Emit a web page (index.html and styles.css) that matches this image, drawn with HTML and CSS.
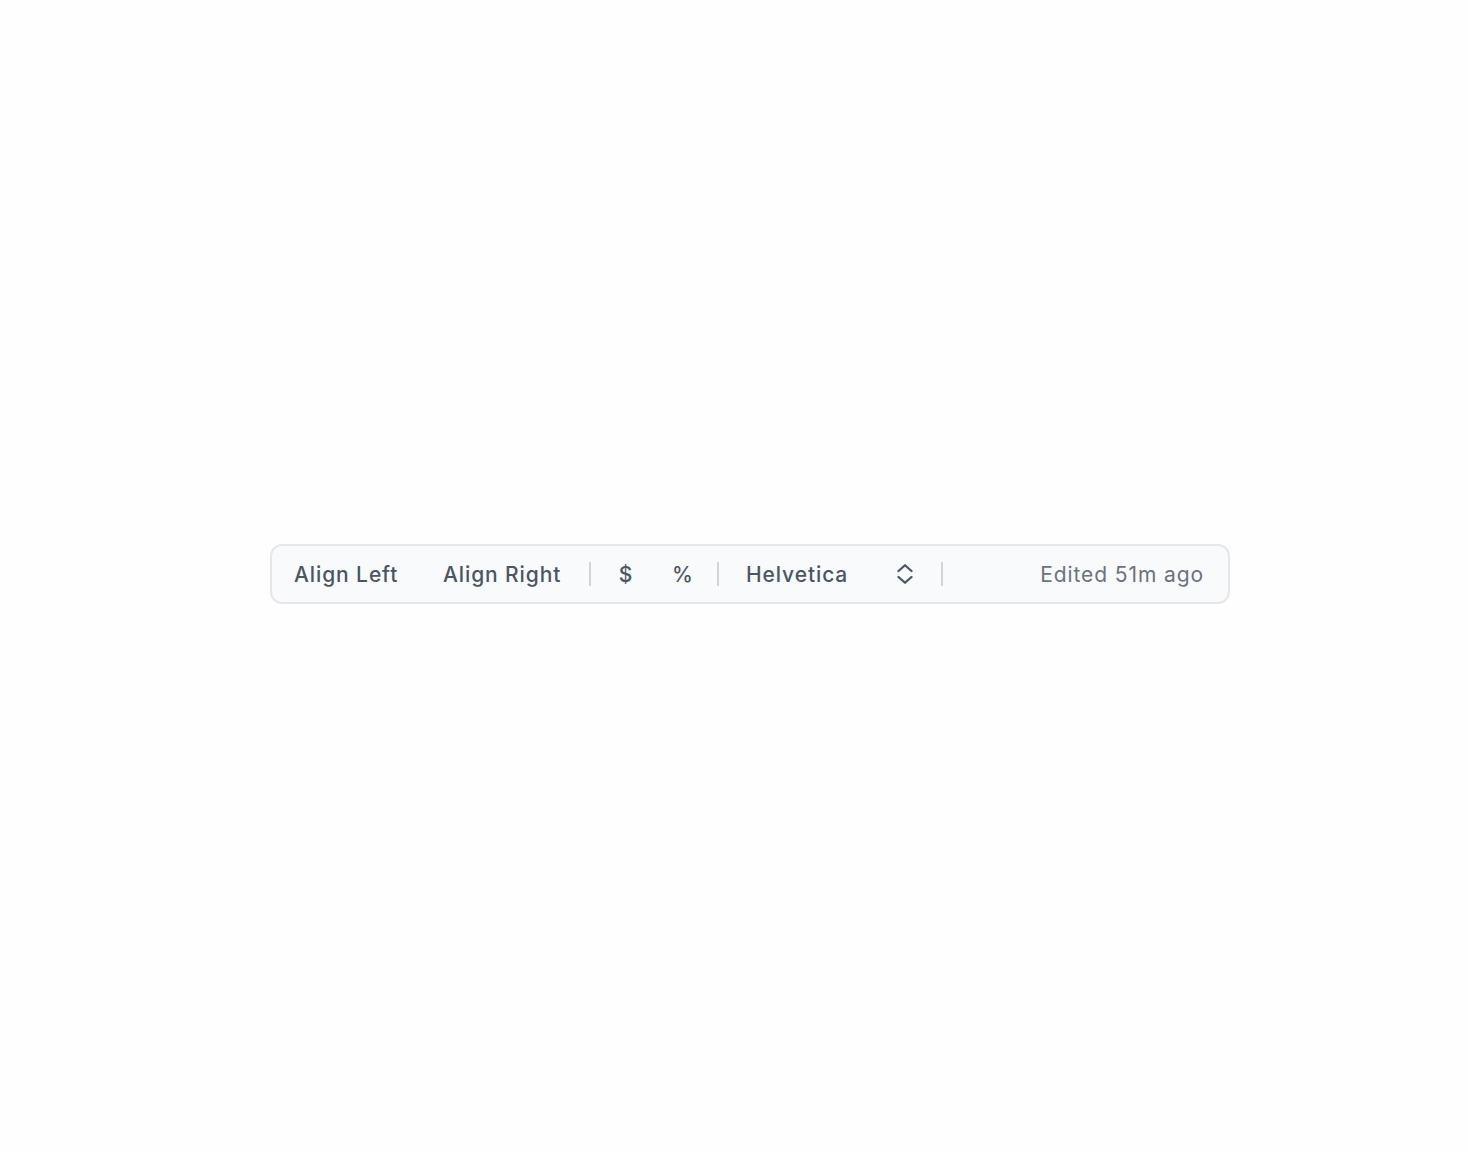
FILE: index.html
```html
<!DOCTYPE html>
<html lang="en">
<head>
<meta charset="utf-8">
<title>Toolbar</title>
<link rel="stylesheet" href="styles.css">
</head>
<body>
<div class="page">
  <div class="toolbar">
    <button class="btn btn-first">Align Left</button>
    <button class="btn btn-second">Align Right</button>
    <span class="sep sep-a"></span>
    <button class="btn btn-sym btn-dollar">$</button>
    <button class="btn btn-sym btn-pct">%</button>
    <span class="sep sep-b"></span>
    <div class="select">
      <span class="select-label">Helvetica</span>
      <svg class="chev" width="16" height="20" viewBox="0 0 16 20" fill="none" stroke="currentColor" stroke-width="2.3" stroke-linecap="round" stroke-linejoin="round" aria-hidden="true">
        <path d="M1.5 7 L8 1.25 L14.5 7"/>
        <path d="M1.5 13 L8 18.75 L14.5 13"/>
      </svg>
    </div>
    <span class="sep sep-c"></span>
    <span class="spacer"></span>
    <span class="edited">Edited 51m ago</span>
  </div>
</div>
</body>
</html>
```

FILE: styles.css
```css
html, body {
  margin: 0;
  padding: 0;
  background: #fefefe;
}

.page {
  padding: 544px 0 0 270px;
  font-family: "Inter", "Liberation Sans", sans-serif;
}

.toolbar {
  box-sizing: border-box;
  width: 960px;
  height: 60px;
  display: flex;
  align-items: center;
  padding: 0 24px 0 22px;
  background: #f9fafb;
  border: 2px solid #e5e7eb;
  border-radius: 12px;
}

.btn {
  flex: none;
  font-family: inherit;
  font-size: 21px;
  font-weight: 500;
  letter-spacing: 0.9px;
  color: #4b5563;
  background: none;
  border: 0;
  padding: 2px 0 0;
  margin: 0;
  line-height: 28px;
  cursor: pointer;
  white-space: nowrap;
  text-align: left;
}

.btn-first {
  width: 106px;
}

.btn-second {
  width: 120px;
  margin-left: 43px;
}

.btn-sym {
  width: 40px;
  text-align: center;
  text-indent: 0.9px;
}

.btn-pct {
  margin-left: 17px;
}

.sep {
  flex: none;
  width: 2px;
  height: 24px;
  margin-top: -1px;
  background: #d1d5db;
}

.sep-a {
  margin-left: 26px;
  margin-right: 14.5px;
}

.sep-b {
  margin-left: 14.5px;
  margin-right: 27px;
}

.sep-c {
  margin-left: 28px;
}

.select {
  flex: none;
  display: flex;
  align-items: center;
  width: 167px;
  color: #4b5563;
}

.select-label {
  font-size: 21px;
  font-weight: 500;
  letter-spacing: 0.9px;
  line-height: 28px;
  padding-top: 2px;
  white-space: nowrap;
}

.chev {
  margin-left: auto;
  display: block;
}

.spacer {
  flex: 1;
}

.edited {
  font-size: 21px;
  font-weight: 400;
  letter-spacing: 0.9px;
  line-height: 28px;
  padding-top: 2px;
  color: #6b7280;
  white-space: nowrap;
}
```
